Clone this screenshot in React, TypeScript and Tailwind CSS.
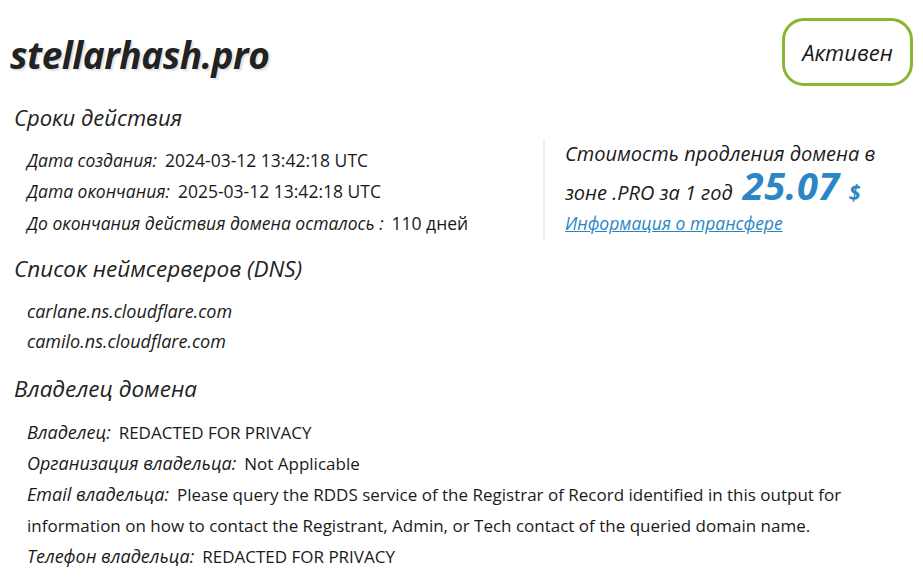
import React from "react";

const label = "italic text-[#1a1a1a]";

export default function App() {
  return (
    <div
      className="w-[923px] h-[585px] bg-white text-[#1a1a1a] overflow-hidden"
      style={{ fontFamily: "'Open Sans', Roboto, sans-serif" }}
    >
      <div className="flex items-start justify-between pl-[10px] pr-[10px] pt-[18px]">
        <h1
          className="text-[37px] leading-[40px] font-bold italic text-[#222] mt-[17px] tracking-[-0.5px]"
          style={{ textShadow: "2px 2px 2px rgba(0,0,0,0.12)" }}
        >
          stellarhash.pro
        </h1>
        <div className="w-[131px] h-[68px] rounded-[22px] border-[3px] border-[#8ab532] flex items-center justify-center italic text-[22px] text-[#1a1a1a]">
          Активен
        </div>
      </div>

      <h2 className="pl-[14px] mt-[16px] text-[22px] leading-[30px] italic text-[#222]">
        Сроки действия
      </h2>

      <div className="flex mt-[13px]">
        <div className="w-[543px] pl-[27px] text-[17.5px] flex flex-col">
          <div className="h-[31px] flex items-center">
            <span className={label}>Дата создания:</span>
            <span className="ml-[8px]">2024-03-12 13:42:18 UTC</span>
          </div>
          <div className="h-[31px] flex items-center">
            <span className={label}>Дата окончания:</span>
            <span className="ml-[8px]">2025-03-12 13:42:18 UTC</span>
          </div>
          <div className="h-[33px] flex items-center">
            <span className={label}>До окончания действия домена осталось :</span>
            <span className="ml-[8px]">110 дней</span>
          </div>
        </div>
        <div className="border-l-[2px] border-[#f0f0f0] pl-[20px] -mt-[6px] h-[100px]">
          <div className="italic text-[20px] leading-[33px] text-[#1a1a1a] whitespace-nowrap -mt-[2px]">
            Стоимость продления домена в
          </div>
          <div className="italic text-[20px] leading-[33px] text-[#1a1a1a] flex items-baseline">
            <span>зоне .PRO за 1 год</span>
            <span className="ml-[10px] text-[38px] leading-[30px] font-bold italic text-[#2a86c5] tracking-[0.5px]">25.07</span>
            <span className="ml-[9px] text-[21px] font-bold italic text-[#2a86c5]">$</span>
          </div>
          <a className="block italic text-[17.5px] leading-[28px] text-[#2a86c5] underline" href="#">
            Информация о трансфере
          </a>
        </div>
      </div>

      <h2 className="pl-[14px] mt-[14px] text-[22.5px] leading-[30px] italic text-[#222]">
        Список неймсерверов (DNS)
      </h2>
      <div className="pl-[27px] mt-[12px] italic text-[18px]">
        <div className="h-[30px] flex items-center">carlane.ns.cloudflare.com</div>
        <div className="h-[30px] flex items-center">camilo.ns.cloudflare.com</div>
      </div>

      <h2 className="pl-[14px] mt-[18px] text-[22.5px] leading-[30px] italic text-[#222]">
        Владелец домена
      </h2>
      <div className="pl-[27px] mt-[13px] w-[870px] text-[17px] leading-[31px]">
        <div>
          <span className={`${label} text-[18px]`}>Владелец:</span>
          <span className="ml-[8px]">REDACTED FOR PRIVACY</span>
        </div>
        <div>
          <span className={`${label} text-[18px]`}>Организация владельца:</span>
          <span className="ml-[8px]">Not Applicable</span>
        </div>
        <div>
          <span className={`${label} text-[18px]`}>Email владельца:</span>
          <span className="ml-[8px]">
            Please query the RDDS service of the Registrar of Record identified in this output for information on how to contact the Registrant, Admin, or Tech contact of the queried domain name.
          </span>
        </div>
        <div>
          <span className={`${label} text-[18px]`}>Телефон владельца:</span>
          <span className="ml-[8px]">REDACTED FOR PRIVACY</span>
        </div>
      </div>
    </div>
  );
}
